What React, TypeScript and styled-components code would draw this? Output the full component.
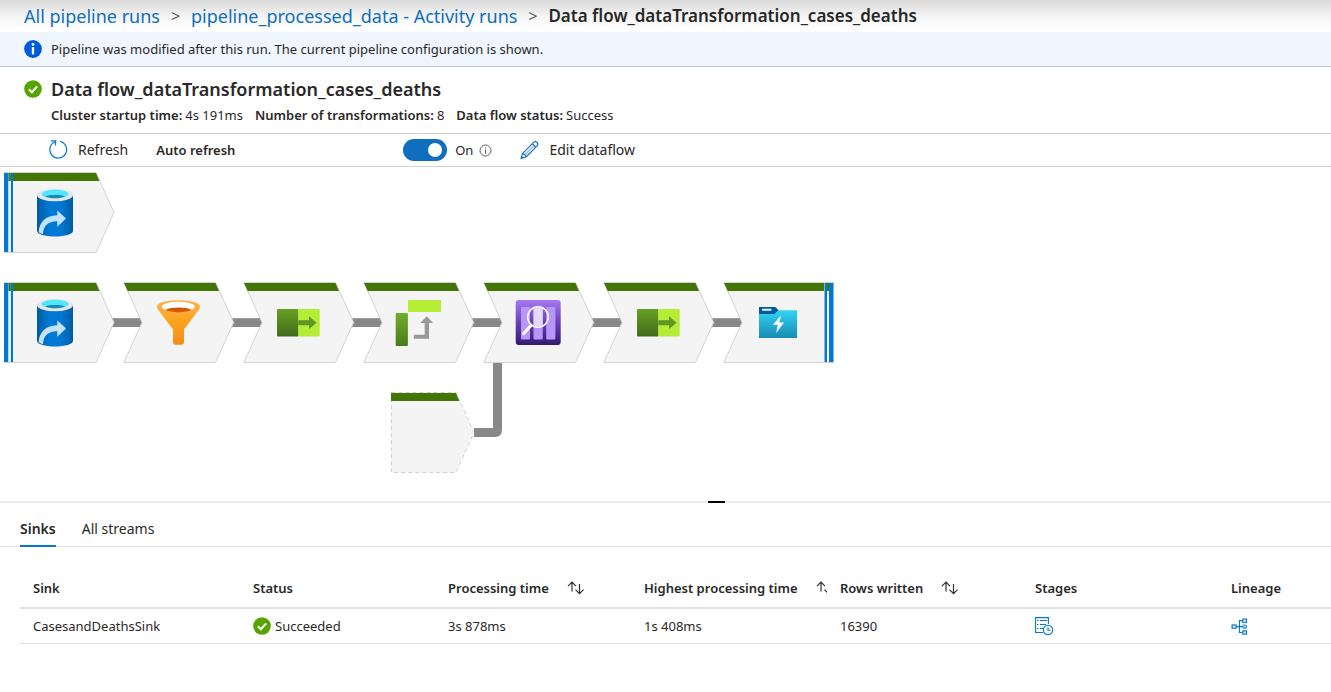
import React from 'react';
import styled, { createGlobalStyle } from 'styled-components';

const GlobalStyle = createGlobalStyle`
  * { box-sizing: border-box; }
  body {
    margin: 0;
    background: #fff;
    color: #292827;
    font-family: "Noto Sans", "Open Sans", sans-serif;
    font-size: 13px;
    line-height: 18px;
  }
  button { font: inherit; color: inherit; background: none; border: 0; padding: 0; cursor: pointer; }
  h1, p { margin: 0; }
  svg { display: block; flex: none; }
`;

const Page = styled.div`
  display: flex;
  flex-direction: column;
  overflow-x: hidden;
`;

const Breadcrumbs = styled.nav`
  display: flex;
  align-items: center;
  height: 32px;
  padding-left: 24px;
  font-size: 18px;
  line-height: 24px;
  white-space: nowrap;
  background: linear-gradient(#d9d9d9, #f4f4f4 50%, #fff 90%);
`;

const Crumb = styled.a`
  color: #106ebe;
  text-decoration: none;
`;

const CrumbDivider = styled.span`
  width: 31px;
  text-align: center;
  font-size: 16px;
  color: #605e5c;
`;

const CurrentCrumb = styled.span`
  font-size: 17px;
  font-weight: 600;
`;

const Banner = styled.div`
  display: flex;
  align-items: center;
  gap: 9px;
  height: 35px;
  padding: 0 24px;
  background: #eff6ff;
  border-bottom: 1px solid #c8c8c8;
`;

const Summary = styled.header`
  display: flex;
  gap: 9px;
  height: 67px;
  padding: 10px 24px 0;
  border-bottom: 1px solid #d2d0ce;
`;

const SummaryIcon = styled.div`
  padding-top: 3px;
`;

const Title = styled.h1`
  font-size: 18px;
  line-height: 24px;
  font-weight: 600;
`;

const Facts = styled.dl`
  display: flex;
  gap: 12px;
  margin: 5px 0 0;
`;

const Fact = styled.div`
  display: flex;
  gap: 3px;
  dt { font-weight: 600; }
  dd { margin: 0; }
`;

const Toolbar = styled.div`
  display: flex;
  align-items: center;
  height: 33px;
  padding-left: 49px;
  border-bottom: 1px solid #d2d0ce;
`;

const ToolButton = styled.button`
  display: flex;
  align-items: center;
  gap: 10px;
  font-size: 14px;
`;

const AutoRefresh = styled.label`
  width: 247px;
  margin-left: 28px;
  font-weight: 600;
`;

const Toggle = styled.input`
  appearance: none;
  width: 44px;
  height: 22px;
  margin: 0 8px 0 0;
  padding: 4px 5px;
  border-radius: 11px;
  background: #106ebe;
  display: flex;
  justify-content: flex-end;
  &::before {
    content: "";
    width: 14px;
    height: 14px;
    border-radius: 50%;
    background: #fff;
  }
`;

const ToggleState = styled.div`
  display: flex;
  align-items: center;
  gap: 6px;
  margin-right: 28px;
`;

const Canvas = styled.main`
  height: 334px;
  overflow: hidden;
`;

const Splitter = styled.div`
  display: flex;
  justify-content: center;
  height: 2px;
  padding-left: 102px;
  background: #ededed;
`;

const SplitterGrip = styled.span`
  width: 17px;
  height: 2px;
  background: #000;
`;

const Tabs = styled.div`
  display: flex;
  gap: 26px;
  height: 44px;
  padding: 8px 20px 0;
  border-bottom: 1px solid #e1dfdd;
`;

const Tab = styled.button<{ $active?: boolean }>`
  height: 36px;
  padding-top: 2px;
  font-size: 14px;
  font-weight: ${p => (p.$active ? 600 : 400)};
  border-bottom: 2px solid ${p => (p.$active ? '#0078d4' : 'transparent')};
`;

const TableArea = styled.section`
  padding: 22px 0 0 20px;
`;

const Table = styled.table`
  width: 100%;
  table-layout: fixed;
  border-collapse: separate;
  border-spacing: 0;
`;

const Col = styled.col<{ $width?: number }>`
  width: ${p => (p.$width ? `${p.$width}px` : 'auto')};
`;

const Th = styled.th`
  height: 40px;
  padding: 0 0 0 13px;
  text-align: left;
  font-weight: 600;
  border-bottom: 2px solid #e1dfdd;
`;

const Td = styled.td`
  height: 35px;
  padding: 0 0 0 13px;
  border-bottom: 1px solid #e1dfdd;
`;

const CellContent = styled.div<{ $gap?: number }>`
  display: flex;
  align-items: center;
  gap: ${p => p.$gap ?? 4}px;
  overflow: hidden;
  white-space: nowrap;
`;

const SortButton = styled.button`
  display: block;
`;

const SuccessIcon = () => (
  <svg width="18" height="18" viewBox="0 0 18 18" aria-hidden="true">
    <circle cx="9" cy="9" r="8.8" fill="#57a300" />
    <path d="M4.8 9.2 7.9 12.2 13.2 6.3" fill="none" stroke="#fff" strokeWidth="2" />
  </svg>
);

const InfoBadge = () => (
  <svg width="18" height="18" viewBox="0 0 18 18" aria-hidden="true">
    <circle cx="9" cy="9" r="8.9" fill="#015cda" />
    <circle cx="9" cy="4.4" r="1.4" fill="#fff" />
    <rect x="7.8" y="7" width="2.4" height="7.5" rx=".8" fill="#fff" />
  </svg>
);

const InfoOutline = () => (
  <svg width="13" height="13" viewBox="0 0 13 13" fill="none" stroke="#605e5c" aria-hidden="true">
    <circle cx="6.5" cy="6.5" r="5.5" />
    <path d="M6.5 5.6V9.6M6.5 3.3V4.4" />
  </svg>
);

const RefreshIcon = () => (
  <svg width="19" height="20" viewBox="0 0 19 20" fill="none" stroke="#0078d4" strokeWidth="1.2" aria-hidden="true">
    <path d="M10.9 1.4A8.4 8.4 0 1 1 6.2 1.8" />
    <path d="M1.8 .8H6.5V5.4" />
  </svg>
);

const PencilIcon = () => (
  <svg width="19" height="19" viewBox="0 0 19 19" fill="none" stroke="#0f6cbd" strokeWidth="1.1" strokeLinejoin="round" aria-hidden="true">
    <path d="M1 17.5 2.6 12.4 13.9 1.1Q15.5 0 17 1.5 18.5 3 17.3 4.7L6 16Z" />
    <path d="M2.6 12.4Q5.3 13.2 6 16M12.3 2.7 15.7 6.2M1.7 15.6 3 16.9" />
    <path d="M4.6 13.9 13.9 4.6" strokeWidth=".8" />
  </svg>
);

const SortIcon = () => (
  <svg width="18" height="14" viewBox="0 0 18 14" fill="none" stroke="#323130" strokeWidth="1.2" aria-hidden="true">
    <path d="M5 10.5V1.2M1 5.2 5 1.2 9 5.2M12.5 3V12.6M8.5 8.6 12.5 12.6 16.5 8.6" />
  </svg>
);

const StagesIcon = () => (
  <svg width="19" height="19" viewBox="0 0 19 19" fill="none" stroke="#0078d4" strokeWidth="1.1" aria-hidden="true">
    <path d="M8 15.5H.6V.6H13.4V7" />
    <path d="M2 3.5H3.5M5 3.5H12M2 7.5H3.5M5 7.5H11M2 11.5H3.5M5 11.5H8" />
    <circle cx="13" cy="13" r="4.7" />
    <path d="M13 10.2V13.2H15.5" />
  </svg>
);

const LineageIcon = () => (
  <svg width="17" height="17" viewBox="0 0 17 17" fill="none" stroke="#0078d4" strokeWidth="1.2" aria-hidden="true">
    <rect x="1.1" y="7" width="4" height="3.2" />
    <rect x="11.8" y="1.1" width="3.6" height="3.2" />
    <rect x="11.8" y="7" width="3.6" height="3.2" rx="1.5" />
    <rect x="11.8" y="12.9" width="3.6" height="3.2" />
    <path d="M5.1 8.6H11.8M11.8 2.7H8.5V14.5H11.8" />
  </svg>
);

const DatabaseGlyph = () => (
  <g>
    <path d="M33 22.5V59C33 62 41 64.5 51 64.5S69 62 69 59V22.5Z" fill="url(#cylinder)" />
    <ellipse cx="51" cy="23" rx="18" ry="6.3" fill="#e6e6e6" />
    <ellipse cx="51" cy="22" rx="13.5" ry="4.3" fill="#50e6ff" />
    <path d="M41 24.4C46 22.5 56 22.5 61 24.4 56 26.8 46 26.8 41 24.4Z" fill="#198ab3" />
    <path d="M34.6 60.3C35.2 51 40.5 43.5 53.3 43.2V38.6L62 46.6 53.3 54.7V49.2C44 49 39.3 53.8 39 62.5Z" fill="#c3e1fa" />
  </g>
);

const FilterGlyph = () => (
  <g>
    <path d="M34 24.6C34 20.7 43.5 18.3 55.5 18.3S77 20.7 77 24.6C77 27 75 29 73 31.5L61 47.5V60.5Q61 62.8 58.5 62.8H52.5Q50 62.8 50 60.5V47.5L38 31.5C36 29 34 27 34 24.6Z" fill="url(#funnel)" />
    <ellipse cx="55.3" cy="24.8" rx="16.5" ry="5" fill="#fff" />
    <path d="M42.5 27.7C48 24.8 63 24.8 68.5 27.7 64 31 47 31 42.5 27.7Z" fill="#d15900" />
  </g>
);

const SelectGlyph = () => (
  <g>
    <rect x="34" y="27" width="21.5" height="27.5" rx="1" fill="url(#green)" />
    <rect x="55.3" y="27" width="21.4" height="27.5" rx="1" fill="#b4ec36" />
    <path d="M55.3 38.2H66V34.3L73.5 40.7 66 47.1V43.2H55.3Z" fill="#5e9624" />
  </g>
);

const PivotGlyph = () => (
  <g>
    <rect x="45" y="18" width="33" height="12" rx="1" fill="#b4ec36" />
    <rect x="32.7" y="31" width="12.2" height="33" rx="1" fill="url(#greenBar)" />
    <path d="M50.8 52.7H61.7V41H57.3L63.7 34.3 70.1 41H66V56.7H50.8Z" fill="#999" />
  </g>
);

const LookupGlyph = () => (
  <g>
    <rect x="32.7" y="18" width="45" height="45" rx="3" fill="url(#purple)" />
    <g fill="#b796f9">
      <rect x="38" y="25" width="9" height="32.5" rx="1" />
      <rect x="50.5" y="25" width="9.2" height="32.5" rx="1" />
      <rect x="63.2" y="25" width="9.2" height="32.5" rx="1" />
    </g>
    <path d="M40.5 51.7 48 43.5" stroke="#fff" strokeWidth="3" strokeLinecap="round" />
    <circle cx="55" cy="35" r="10.3" fill="none" stroke="#fff" strokeWidth="1.6" />
    <path d="M50.5 26.8Q55 24.5 59.7 26.8V43.2Q55 45.5 50.5 43.2Z" fill="#e3dafc" />
  </g>
);

const SinkGlyph = () => (
  <g>
    <path d="M36 25.2H52L55.3 28.2V32H36Z" fill="#005ba1" />
    <path d="M36 32H51L55 28.2H74V56H36Z" fill="url(#folder)" />
    <path d="M36 32V26.2Q36 25 37.2 25H51.5Q52.3 25 53 25.7L55.3 28.2 51.8 31.4Q51.2 32 50.4 32Z" fill="#005ba1" />
    <rect x="39" y="26.8" width="9.4" height="1.9" rx=".6" fill="#eaf6ff" />
    <path d="M58 33.3 50 42.7H54.7L53.2 51 61 40.5H56.3Z" fill="#fff" />
  </g>
);

type NodeProps = { x: number; y: number; children?: React.ReactNode };

const SourceNode = ({ x, y, children }: NodeProps) => (
  <g transform={`translate(${x} ${y})`}>
    <path d="M.5.5H92L110 40.5 92 80.5H.5Z" fill="#f4f4f4" stroke="#d2d2d2" />
    <rect x="4" y="1" width="4" height="79" fill="#fff" />
    <path d="M4 1H92L95.5 9H4Z" fill="#427607" />
    <path d="M4.5 1V80M7 1V80" stroke="#7fb6e4" strokeOpacity=".6" />
    <path d="M0 1H4V80H0ZM7 1H9V80H7Z" fill="#0078d4" />
    {children}
  </g>
);

const StepNode = ({ x, y, children }: NodeProps) => (
  <g transform={`translate(${x} ${y})`}>
    <path d="M.8.5H92.5L110.7 40.5 92.5 80.5H.8L19 40.5Z" fill="#f4f4f4" stroke="#d2d2d2" />
    <path d="M1 1H92.5L96 9H4.7Z" fill="#427607" />
    {children}
  </g>
);

const SinkNode = ({ x, y, children }: NodeProps) => (
  <g transform={`translate(${x} ${y})`}>
    <path d="M.8.5H110.5V80.5H.8L19 40.5Z" fill="#f4f4f4" stroke="#d2d2d2" />
    <rect x="103" y="9" width="3" height="71" fill="#fff" />
    <path d="M1 1H110V9H4.7Z" fill="#427607" />
    <path d="M101.5 1V80M110.5 1V80" stroke="#7fb6e4" />
    <path d="M102 1H104V80H102ZM106 1H110V80H106Z" fill="#0078d4" />
    {children}
  </g>
);

const ReferenceNode = ({ x, y }: NodeProps) => (
  <g transform={`translate(${x} ${y})`}>
    <path d="M.5.5H65L83 40.5 65 80.5H.5Z" fill="#f4f4f4" stroke="#cfcfcf" strokeDasharray="4 3" />
    <path d="M0 1H65L68.3 9H0Z" fill="#427607" />
  </g>
);

const Link = ({ x, y }: NodeProps) => (
  <g>
    <rect x={x} y={y} width="31" height="9" fill="#8a8886" />
    <rect x={x} y={y} width="31" height="1" fill="#a19f9d" />
  </g>
);

const Gradient = ({ id, stops, across }: { id: string; stops: string[]; across?: boolean }) => (
  <linearGradient id={id} x1="0" y1="0" x2={across ? 1 : 0} y2={across ? 0 : 1}>
    {stops.map((color, i) => (
      <stop key={i} offset={i / (stops.length - 1)} stopColor={color} />
    ))}
  </linearGradient>
);

const DataFlowGraph = () => (
  <svg width="840" height="334" viewBox="0 0 840 334" role="img" aria-label="Data flow graph">
    <defs>
      <Gradient id="cylinder" across stops={['#005ba1', '#0078d4', '#0078d4', '#005ba1']} />
      <Gradient id="funnel" stops={['#ffb34d', '#faa21d', '#f78d1e']} />
      <Gradient id="green" stops={['#66a025', '#426b1a']} />
      <Gradient id="greenBar" stops={['#6fb02b', '#4b7a1d']} />
      <Gradient id="purple" stops={['#a67af4', '#6a3fb5', '#341a6e']} />
      <Gradient id="folder" stops={['#32d4f5', '#198ab3']} />
    </defs>
    {[112, 232, 352, 472, 592, 712].map(x => (
      <Link key={x} x={x} y={151} />
    ))}
    <path d="M474 261H493V195H502V263Q502 270 495 270H474Z" fill="#8a8886" />
    <SourceNode x={4} y={5}><DatabaseGlyph /></SourceNode>
    <SourceNode x={4} y={115}><DatabaseGlyph /></SourceNode>
    <StepNode x={123} y={115}><FilterGlyph /></StepNode>
    <StepNode x={243} y={115}><SelectGlyph /></StepNode>
    <StepNode x={363} y={115}><PivotGlyph /></StepNode>
    <StepNode x={483} y={115}><LookupGlyph /></StepNode>
    <StepNode x={603} y={115}><SelectGlyph /></StepNode>
    <SinkNode x={723} y={115}><SinkGlyph /></SinkNode>
    <ReferenceNode x={391} y={225} />
  </svg>
);

const Sort = ({ column }: { column: string }) => (
  <SortButton type="button" aria-label={`Sort by ${column}`}><SortIcon /></SortButton>
);

const columns = [
  { name: 'Sink', width: 220 },
  { name: 'Status', width: 195 },
  { name: 'Processing time', width: 196, sortable: true },
  { name: 'Highest processing time', width: 196, sortable: true },
  { name: 'Rows written', width: 195, sortable: true },
  { name: 'Stages', width: 196 },
  { name: 'Lineage' },
];

export default function App() {
  return (
    <Page>
      <GlobalStyle />
      <Breadcrumbs aria-label="Breadcrumb">
        <Crumb href="#runs">All pipeline runs</Crumb>
        <CrumbDivider>&gt;</CrumbDivider>
        <Crumb href="#activity">pipeline_processed_data - Activity runs</Crumb>
        <CrumbDivider>&gt;</CrumbDivider>
        <CurrentCrumb>Data flow_dataTransformation_cases_deaths</CurrentCrumb>
      </Breadcrumbs>
      <Banner role="status">
        <InfoBadge />
        <p>Pipeline was modified after this run. The current pipeline configuration is shown.</p>
      </Banner>
      <Summary>
        <SummaryIcon><SuccessIcon /></SummaryIcon>
        <div>
          <Title>Data flow_dataTransformation_cases_deaths</Title>
          <Facts>
            <Fact><dt>Cluster startup time:</dt><dd>4s 191ms</dd></Fact>
            <Fact><dt>Number of transformations:</dt><dd>8</dd></Fact>
            <Fact><dt>Data flow status:</dt><dd>Success</dd></Fact>
          </Facts>
        </div>
      </Summary>
      <Toolbar>
        <ToolButton type="button"><RefreshIcon />Refresh</ToolButton>
        <AutoRefresh htmlFor="auto-refresh">Auto refresh</AutoRefresh>
        <Toggle id="auto-refresh" type="checkbox" role="switch" defaultChecked />
        <ToggleState>On <InfoOutline /></ToggleState>
        <ToolButton type="button"><PencilIcon />Edit dataflow</ToolButton>
      </Toolbar>
      <Canvas><DataFlowGraph /></Canvas>
      <Splitter><SplitterGrip /></Splitter>
      <Tabs role="tablist">
        <Tab type="button" role="tab" aria-selected="true" $active>Sinks</Tab>
        <Tab type="button" role="tab" aria-selected="false">All streams</Tab>
      </Tabs>
      <TableArea>
        <Table>
          <colgroup>
            {columns.map(c => <Col key={c.name} $width={c.width} />)}
          </colgroup>
          <thead>
            <tr>
              {columns.map(c => (
                <Th key={c.name} scope="col">
                  <CellContent $gap={18}>
                    {c.name}
                    {c.sortable && <Sort column={c.name} />}
                  </CellContent>
                </Th>
              ))}
            </tr>
          </thead>
          <tbody>
            <tr>
              <Td>CasesandDeathsSink</Td>
              <Td><CellContent><SuccessIcon />Succeeded</CellContent></Td>
              <Td>3s 878ms</Td>
              <Td>1s 408ms</Td>
              <Td>16390</Td>
              <Td><CellContent><button type="button" aria-label="View stages"><StagesIcon /></button></CellContent></Td>
              <Td><CellContent><button type="button" aria-label="View lineage"><LineageIcon /></button></CellContent></Td>
            </tr>
          </tbody>
        </Table>
      </TableArea>
    </Page>
  );
}
